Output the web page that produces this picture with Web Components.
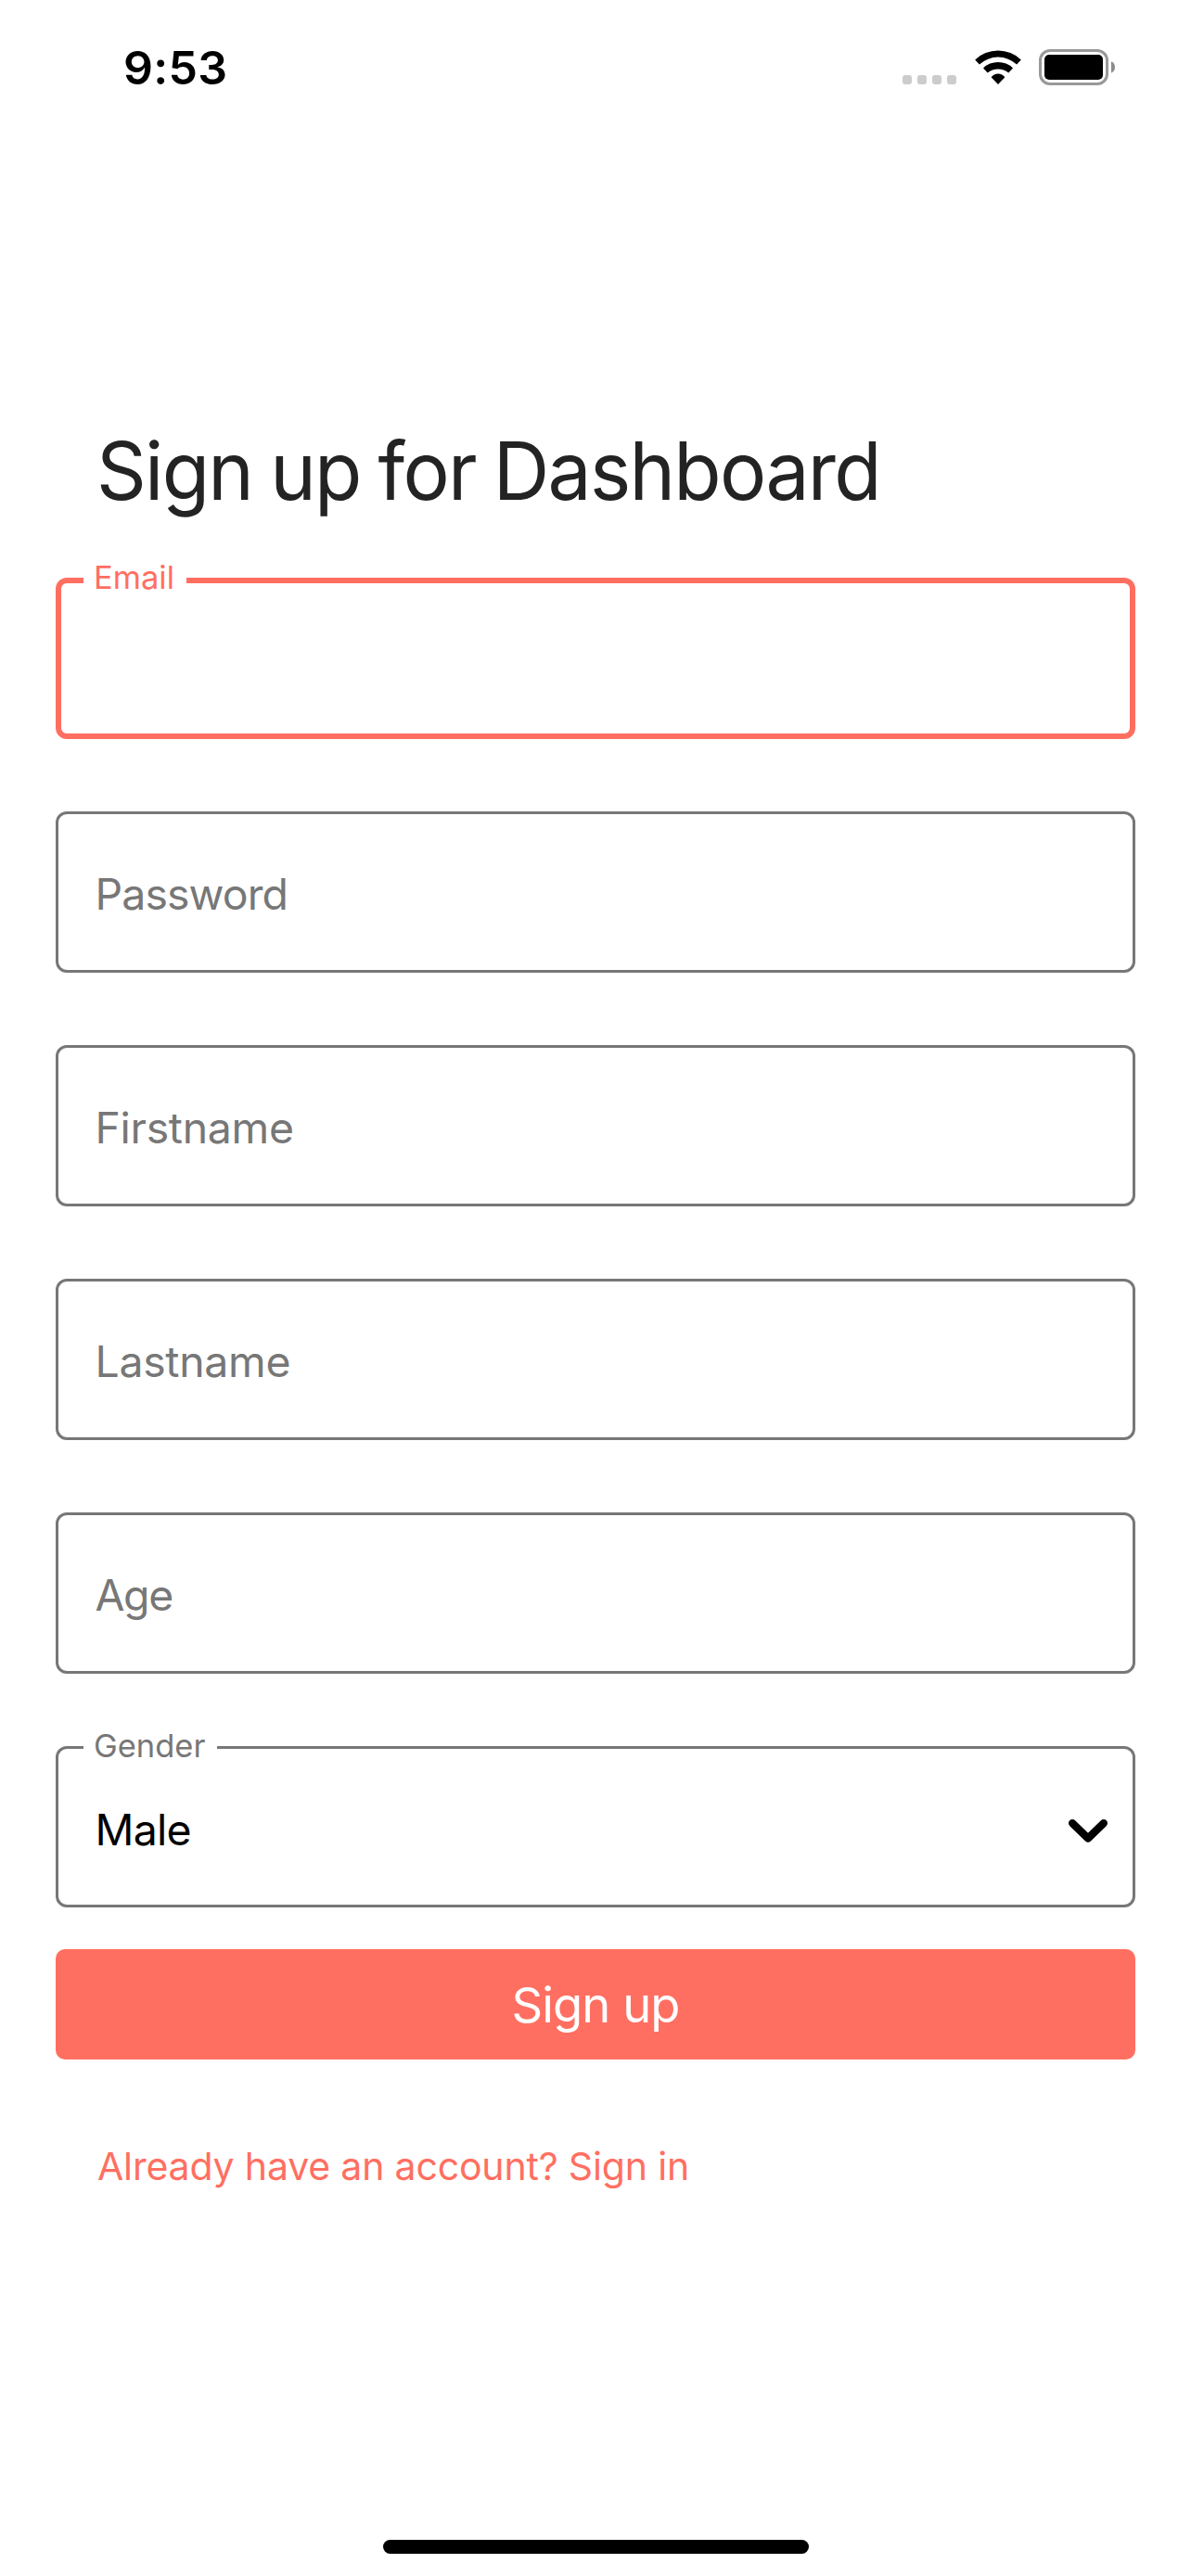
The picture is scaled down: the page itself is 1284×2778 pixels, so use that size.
<!DOCTYPE html>
<html lang="en">
<head>
<meta charset="utf-8">
<title>Sign up</title>
<style>
  html, body { margin: 0; background: #fff; }
  body { font-family: Inter, "Liberation Sans", sans-serif; }
</style>
</head>
<body>
<signup-screen>
  <status-bar slot="status">9:53</status-bar>
  <screen-title>Sign up for Dashboard</screen-title>
  <form-fields>
    <text-field label="Email" focused notch="111" track="0"></text-field>
    <text-field track="-0.9">Password</text-field>
    <text-field track="-0.3">Firstname</text-field>
    <text-field track="-0.3">Lastname</text-field>
    <text-field track="-1.4">Age</text-field>
    <text-field label="Gender" filled notch="144" track="-0.7">Male<chevron-icon slot="icon"></chevron-icon></text-field>
  </form-fields>
  <primary-button>Sign up</primary-button>
  <nav-link>Already have an account? Sign in</nav-link>
  <home-indicator slot="footer"></home-indicator>
</signup-screen>
<script>
const define = (name, html, setup) => customElements.define(name, class extends HTMLElement {
  connectedCallback() {
    if (this.shadowRoot) return;
    this.attachShadow({ mode: 'open' }).innerHTML = html;
    if (setup) setup(this, this.shadowRoot);
  }
});

define('signup-screen', `
<style>
  :host { display: flex; flex-direction: column; width: 1284px; height: 2778px; box-sizing: border-box; overflow: hidden; background: #fff; }
  main { flex: 1; display: flex; flex-direction: column; padding: 318px 60px 0; }
</style>
<slot name="status"></slot><main><slot></slot></main><slot name="footer"></slot>`);

define('status-bar', `
<style>
  :host { display: flex; height: 140px; box-sizing: border-box; padding: 43px 82px 0 133px; justify-content: space-between; align-items: flex-start; color: #000; }
  .time { font-size: 50px; font-weight: 600; line-height: 60px; letter-spacing: .3px; }
  .icons { display: flex; align-items: flex-start; padding-top: 10px; }
  .dots { display: flex; gap: 6px; padding-top: 28px; margin-right: 19.5px; }
  .dots i { width: 10px; height: 10px; border-radius: 3px; background: #ccc; }
  .wifi { margin: 1px 19.5px 0 0; }
  svg { display: block; }
</style>
<span class="time"><slot></slot></span>
<div class="icons">
  <div class="dots"><i></i><i></i><i></i><i></i></div>
  <svg class="wifi" width="50" height="37" viewBox="0 0 50 37">
    <path d="M.2 10.4A36 36 0 0 1 49.8 10.4L45.1 15.5A29.5 29.5 0 0 0 4.9 15.5Z"/>
    <path d="M9 19.4A23 23 0 0 1 41 19.4L36.3 24.4A18 18 0 0 0 13.7 24.4Z"/>
    <path d="M17.6 29.2A9.2 9.2 0 0 1 32.4 29.2L25 37Z"/>
  </svg>
  <svg width="82" height="39" viewBox="0 0 82 39">
    <rect x="1.5" y="1.5" width="72" height="36" rx="10.5" fill="none" stroke="#999" stroke-width="3"/>
    <rect x="6" y="6" width="63" height="27" rx="5"/>
    <path d="M78 13.3Q82 15.2 82 19.5T78 25.7Z" fill="#8c8c8c"/>
  </svg>
</div>`);

define('screen-title', `
<style>
  :host { display: block; padding-left: 44px; margin-bottom: 65px; height: 100px; }
  h1 { display: inline-block; margin: 0; font-size: 86.5px; line-height: 100px; font-weight: 400; letter-spacing: -1.8px; word-spacing: -3px; white-space: nowrap; color: #232323; transform: scaleX(.97); transform-origin: 0 0; }
</style>
<h1><slot></slot></h1>`);

define('form-fields', `
<style>:host { display: flex; flex-direction: column; gap: 78px; }</style><slot></slot>`);

define('text-field', `
<style>
  :host { --line: #777; display: block; position: relative; height: 174px; color: #777; }
  :host([focused]) { --line: #ff6f61; }
  .box { height: 100%; box-sizing: border-box; border: 3px solid var(--line); border-radius: 12px; padding: 4px 27px 0 39.5px; display: flex; align-items: center; justify-content: space-between; }
  :host([focused]) .box { border-width: 6px; }
  :host([filled]) { color: #000; }
  :host([filled]) .box { padding-top: 6px; }
  .value { font-size: 46.4px; line-height: 60px; }
  .label { position: absolute; left: 30px; top: -20px; box-sizing: border-box; padding-left: 11px; font-size: 34.5px; line-height: 40px; background: #fff; color: var(--line); white-space: nowrap; }
</style>
<div class="box"><span class="value"><slot></slot></span><slot name="icon"></slot></div>`,
(el, root) => {
  root.querySelector('.value').style.letterSpacing = el.getAttribute('track') + 'px';
  if (el.hasAttribute('label')) {
    const label = document.createElement('span');
    label.className = 'label';
    label.textContent = el.getAttribute('label');
    label.style.width = el.getAttribute('notch') + 'px';
    root.append(label);
  }
});

define('chevron-icon', `
<style>:host { display: block; width: 42px; height: 25px; margin-top: 3px; } svg { display: block; }</style>
<svg width="42" height="25" viewBox="0 0 42 25"><path d="M4.2 4.2L21 20.4L37.8 4.2" fill="none" stroke="#000" stroke-width="8.4" stroke-linecap="round" stroke-linejoin="round"/></svg>`);

define('primary-button', `
<style>
  :host { display: block; margin-top: 45px; }
  button { display: flex; width: 100%; height: 119px; padding: 0; border: 0; border-radius: 10px; background: #ff6f61; color: #fff; align-items: center; justify-content: center; font: 400 52.5px/64px Inter, "Liberation Sans", sans-serif; letter-spacing: -.95px; }
</style>
<button><slot></slot></button>`);

define('nav-link', `
<style>:host { display: block; margin: 90px 0 0 45px; font-size: 41px; line-height: 50px; letter-spacing: -.17px; color: #ff6f61; white-space: nowrap; }</style>
<slot></slot>`);

define('home-indicator', `
<style>:host { display: block; align-self: center; width: 459px; height: 15px; border-radius: 8px; background: #000; margin-bottom: 24px; }</style>`);
</script>
</body>
</html>
